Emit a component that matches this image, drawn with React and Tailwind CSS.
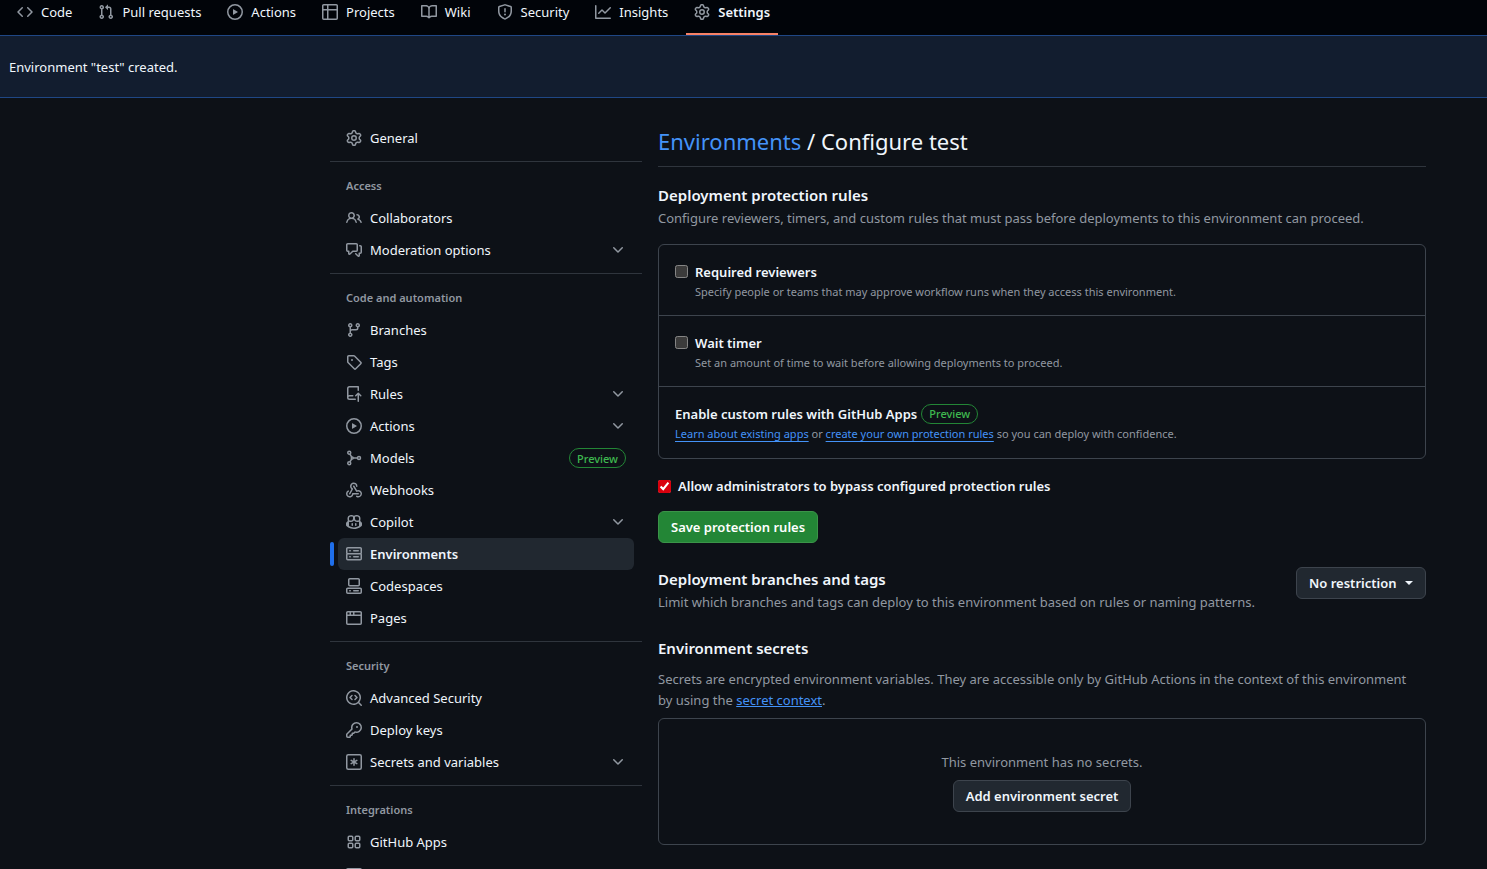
import React from "react";

const PATHS = {
  code: ["m11.28 3.22 4.25 4.25a.75.75 0 0 1 0 1.06l-4.25 4.25a.749.749 0 0 1-1.275-.326.749.749 0 0 1 .215-.734L13.94 8l-3.72-3.72a.749.749 0 0 1 .326-1.275.749.749 0 0 1 .734.215Zm-6.56 0a.751.751 0 0 1 1.042.018.751.751 0 0 1 .018 1.042L2.06 8l3.72 3.72a.749.749 0 0 1-.326 1.275.749.749 0 0 1-.734-.215L.47 8.53a.75.75 0 0 1 0-1.06Z"],
  pullRequest: ["M1.5 3.25a2.25 2.25 0 1 1 3 2.122v5.256a2.251 2.251 0 1 1-1.5 0V5.372A2.25 2.25 0 0 1 1.5 3.25Zm5.677-.177L9.573.677A.25.25 0 0 1 10 .854V2.5h1A2.5 2.5 0 0 1 13.5 5v5.628a2.251 2.251 0 1 1-1.5 0V5a1 1 0 0 0-1-1h-1v1.646a.25.25 0 0 1-.427.177L7.177 3.427a.25.25 0 0 1 0-.354ZM3.75 2.5a.75.75 0 1 0 0 1.5.75.75 0 0 0 0-1.5Zm0 9.5a.75.75 0 1 0 0 1.5.75.75 0 0 0 0-1.5Zm8.25.75a.75.75 0 1 0 1.5 0 .75.75 0 0 0-1.5 0Z"],
  play: ["M8 0a8 8 0 1 1 0 16A8 8 0 0 1 8 0ZM1.5 8a6.5 6.5 0 1 0 13 0 6.5 6.5 0 0 0-13 0Zm4.879-2.773 4.264 2.559a.25.25 0 0 1 0 .428l-4.264 2.559A.25.25 0 0 1 6 10.559V5.442a.25.25 0 0 1 .379-.215Z"],
  table: ["M0 1.75C0 .784.784 0 1.75 0h12.5C15.216 0 16 .784 16 1.75v12.5A1.75 1.75 0 0 1 14.25 16H1.75A1.75 1.75 0 0 1 0 14.25ZM6.5 6.5v8h7.75a.25.25 0 0 0 .25-.25V6.5Zm8-1.5V1.75a.25.25 0 0 0-.25-.25H6.5V5Zm-13 1.5v7.75c0 .138.112.25.25.25H5v-8ZM5 5V1.5H1.75a.25.25 0 0 0-.25.25V5Z"],
  book: ["M0 1.75A.75.75 0 0 1 .75 1h4.253c1.227 0 2.317.59 3 1.501A3.743 3.743 0 0 1 11.006 1h4.245a.75.75 0 0 1 .75.75v10.5a.75.75 0 0 1-.75.75h-4.507a2.25 2.25 0 0 0-1.591.659l-.622.621a.75.75 0 0 1-1.06 0l-.622-.621A2.25 2.25 0 0 0 5.258 13H.75a.75.75 0 0 1-.75-.75Zm7.251 10.324.004-5.073-.002-2.253A2.25 2.25 0 0 0 5.003 2.5H1.5v9h3.757a3.75 3.75 0 0 1 1.994.574ZM8.755 4.75l-.004 7.322a3.752 3.752 0 0 1 1.992-.572H14.5v-9h-3.495a2.25 2.25 0 0 0-2.25 2.25Z"],
  shield: ["M7.467.133a1.748 1.748 0 0 1 1.066 0l5.25 1.68A1.75 1.75 0 0 1 15 3.48V7c0 1.566-.32 3.182-1.303 4.682-.983 1.498-2.585 2.813-5.032 3.855a1.697 1.697 0 0 1-1.33 0c-2.447-1.042-4.049-2.357-5.032-3.855C1.32 10.182 1 8.566 1 7V3.48a1.75 1.75 0 0 1 1.217-1.667Zm.61 1.429a.25.25 0 0 0-.153 0l-5.25 1.68a.25.25 0 0 0-.174.238V7c0 1.358.275 2.666 1.057 3.86.784 1.194 2.121 2.34 4.366 3.297a.196.196 0 0 0 .154 0c2.245-.956 3.582-2.104 4.366-3.298C13.225 9.666 13.5 8.36 13.5 7V3.48a.251.251 0 0 0-.174-.237l-5.25-1.68ZM8.75 4.75v3a.75.75 0 0 1-1.5 0v-3a.75.75 0 0 1 1.5 0ZM9 10.5a1 1 0 1 1-2 0 1 1 0 0 1 2 0Z"],
  graph: ["M1.5 1.75V13.5h13.75a.75.75 0 0 1 0 1.5H.75a.75.75 0 0 1-.75-.75V1.75a.75.75 0 0 1 1.5 0Zm14.28 2.53-5.25 5.25a.75.75 0 0 1-1.06 0L7 7.06 4.28 9.78a.751.751 0 0 1-1.042-.018.751.751 0 0 1-.018-1.042l3.25-3.25a.75.75 0 0 1 1.06 0L10 7.94l4.72-4.72a.751.751 0 0 1 1.042.018.751.751 0 0 1 .018 1.042Z"],
  gear: ["M8 0a8.2 8.2 0 0 1 .701.031C9.444.095 9.99.645 10.16 1.29l.288 1.107c.018.066.079.158.212.224.231.114.454.243.668.386.123.082.233.09.299.071l1.103-.303c.644-.176 1.392.021 1.82.63.27.385.506.792.704 1.218.315.675.111 1.422-.364 1.891l-.814.806c-.049.048-.098.147-.088.294.016.257.016.515 0 .772-.01.147.038.246.088.294l.814.806c.475.469.679 1.216.364 1.891a7.977 7.977 0 0 1-.704 1.217c-.428.61-1.176.807-1.82.63l-1.102-.302c-.067-.019-.177-.011-.3.071a5.909 5.909 0 0 1-.668.386c-.133.066-.194.158-.211.224l-.29 1.106c-.168.646-.715 1.196-1.458 1.26a8.006 8.006 0 0 1-1.402 0c-.743-.064-1.289-.614-1.458-1.26l-.289-1.106c-.018-.066-.079-.158-.212-.224a5.738 5.738 0 0 1-.668-.386c-.123-.082-.233-.09-.299-.071l-1.103.303c-.644.176-1.392-.021-1.82-.63a8.12 8.12 0 0 1-.704-1.218c-.315-.675-.111-1.422.363-1.891l.815-.806c.05-.048.098-.147.088-.294a6.214 6.214 0 0 1 0-.772c.01-.147-.038-.246-.088-.294l-.815-.806C.635 6.045.431 5.298.746 4.623a7.92 7.92 0 0 1 .704-1.217c.428-.61 1.176-.807 1.82-.63l1.102.302c.067.019.177.011.3-.071.214-.143.437-.272.668-.386.133-.066.194-.158.211-.224l.29-1.106C6.009.645 6.556.095 7.299.03 7.53.01 7.764 0 8 0Zm-.571 1.525c-.036.003-.108.036-.137.146l-.289 1.105c-.147.561-.549.967-.998 1.189-.173.086-.34.183-.5.29-.417.278-.97.423-1.529.27l-1.103-.303c-.109-.03-.175.016-.195.045-.22.312-.412.644-.573.99-.014.031-.021.11.059.19l.815.806c.411.406.562.957.53 1.456a4.709 4.709 0 0 0 0 .582c.032.499-.119 1.05-.53 1.456l-.815.806c-.081.08-.073.159-.059.19.162.346.353.677.573.989.02.03.085.076.195.046l1.102-.303c.56-.153 1.113-.008 1.53.27.161.107.328.204.501.29.447.222.85.629.997 1.189l.289 1.105c.029.109.101.143.137.146a6.6 6.6 0 0 0 1.142 0c.036-.003.108-.036.137-.146l.289-1.105c.147-.561.549-.967.998-1.189.173-.086.34-.183.5-.29.417-.278.97-.423 1.529-.27l1.103.303c.109.029.175-.016.195-.045.22-.313.411-.644.573-.99.014-.031.021-.11-.059-.19l-.815-.806c-.411-.406-.562-.957-.53-1.456a4.709 4.709 0 0 0 0-.582c-.032-.499.119-1.05.53-1.456l.815-.806c.081-.08.073-.159.059-.19a6.464 6.464 0 0 0-.573-.989c-.02-.03-.085-.076-.195-.046l-1.102.303c-.56.153-1.113.008-1.53-.27a4.44 4.44 0 0 0-.501-.29c-.447-.222-.85-.629-.997-1.189l-.289-1.105c-.029-.11-.101-.143-.137-.146a6.6 6.6 0 0 0-1.142 0ZM11 8a3 3 0 1 1-6 0 3 3 0 0 1 6 0ZM9.5 8a1.5 1.5 0 1 0-3.001.001A1.5 1.5 0 0 0 9.5 8Z"],
  people: ["M2 5.5a3.5 3.5 0 1 1 5.898 2.549 5.508 5.508 0 0 1 3.034 4.084.75.75 0 1 1-1.482.235 4 4 0 0 0-7.9 0 .75.75 0 0 1-1.482-.236A5.507 5.507 0 0 1 3.102 8.05 3.493 3.493 0 0 1 2 5.5ZM11 4a3.001 3.001 0 0 1 2.22 5.018 5.01 5.01 0 0 1 2.56 3.012.749.749 0 0 1-.885.954.752.752 0 0 1-.549-.514 3.507 3.507 0 0 0-2.522-2.372.75.75 0 0 1-.574-.73v-.352a.75.75 0 0 1 .416-.672A1.5 1.5 0 0 0 11 5.5.75.75 0 0 1 11 4Zm-5.5-.5a2 2 0 1 0-.001 3.999A2 2 0 0 0 5.5 3.5Z"],
  discussion: ["M1.75 1h8.5c.966 0 1.75.784 1.75 1.75v5.5A1.75 1.75 0 0 1 10.25 10H7.061l-2.574 2.573A1.458 1.458 0 0 1 2 11.543V10h-.25A1.75 1.75 0 0 1 0 8.25v-5.5C0 1.784.784 1 1.75 1ZM1.5 2.75v5.5c0 .138.112.25.25.25h1a.75.75 0 0 1 .75.75v2.19l2.72-2.72a.749.749 0 0 1 .53-.22h3.5a.25.25 0 0 0 .25-.25v-5.5a.25.25 0 0 0-.25-.25h-8.5a.25.25 0 0 0-.25.25Zm13 2a.25.25 0 0 0-.25-.25h-.5a.75.75 0 0 1 0-1.5h.5c.966 0 1.75.784 1.75 1.75v5.5A1.75 1.75 0 0 1 14.25 12H14v1.543a1.458 1.458 0 0 1-2.487 1.03L9.22 12.28a.749.749 0 0 1 .326-1.275.749.749 0 0 1 .734.215l2.22 2.22v-2.19a.75.75 0 0 1 .75-.75h1a.25.25 0 0 0 .25-.25Z"],
  branch: ["M9.5 3.25a2.25 2.25 0 1 1 3 2.122V6A2.5 2.5 0 0 1 10 8.5H6a1 1 0 0 0-1 1v1.128a2.251 2.251 0 1 1-1.5 0V5.372a2.25 2.25 0 1 1 1.5 0v1.836A2.493 2.493 0 0 1 6 7h4a1 1 0 0 0 1-1v-.628A2.25 2.25 0 0 1 9.5 3.25Zm-6 0a.75.75 0 1 0 1.5 0 .75.75 0 0 0-1.5 0Zm8.25-.75a.75.75 0 1 0 0 1.5.75.75 0 0 0 0-1.5ZM4.25 12a.75.75 0 1 0 0 1.5.75.75 0 0 0 0-1.5Z"],
  tag: ["M1 7.775V2.75C1 1.784 1.784 1 2.75 1h5.025c.464 0 .91.184 1.238.513l6.25 6.25a1.75 1.75 0 0 1 0 2.474l-5.026 5.026a1.75 1.75 0 0 1-2.474 0l-6.25-6.25A1.752 1.752 0 0 1 1 7.775Zm1.5 0c0 .066.026.13.073.177l6.25 6.25a.25.25 0 0 0 .354 0l5.025-5.025a.25.25 0 0 0 0-.354l-6.25-6.25a.25.25 0 0 0-.177-.073H2.75a.25.25 0 0 0-.25.25ZM6 5a1 1 0 1 1 0 2 1 1 0 0 1 0-2Z"],
  repoPush: ["M1 2.5A2.5 2.5 0 0 1 3.5 0h8.75a.75.75 0 0 1 .75.75v3.5a.75.75 0 0 1-1.5 0V1.5h-8a1 1 0 0 0-1 1v6.708A2.493 2.493 0 0 1 3.5 9h3.25a.75.75 0 0 1 0 1.5H3.5a1 1 0 0 0 0 2h5.75a.75.75 0 0 1 0 1.5H3.5A2.5 2.5 0 0 1 1 11.5Zm13.23 7.79-.001.001-1.224-1.224v6.184a.75.75 0 0 1-1.5 0V9.066L10.28 10.29a.75.75 0 0 1-1.06-1.061l2.505-2.504a.75.75 0 0 1 1.06 0L15.29 9.23a.751.751 0 0 1-.018 1.042.751.751 0 0 1-1.042.018Z"],
  webhook: [
    "M5.5 4.25a2.25 2.25 0 0 1 4.5 0 .75.75 0 0 0 1.5 0 3.75 3.75 0 1 0-6.14 2.889l-2.272 4.258a.75.75 0 0 0 1.324.706L7 7.25a.75.75 0 0 0-.309-1.015A2.25 2.25 0 0 1 5.5 4.25Z",
    "M7.364 3.607a.75.75 0 0 1 1.03.257l2.608 4.349a3.75 3.75 0 1 1-.628 6.785.75.75 0 0 1 .752-1.299 2.25 2.25 0 1 0-.033-3.88.75.75 0 0 1-1.03-.256L7.107 4.636a.75.75 0 0 1 .257-1.03Z",
    "M2.9 8.776A.75.75 0 0 1 2.625 9.8 2.25 2.25 0 1 0 6 11.75a.75.75 0 0 1 .75-.751h5.5a.75.75 0 0 1 0 1.5H7.425a3.751 3.751 0 1 1-5.55-3.998.75.75 0 0 1 1.024.274Z",
  ],
  copilot: [
    "M7.998 15.035c-4.562 0-7.873-2.914-7.998-3.749V9.338c.085-.628.677-1.686 1.588-2.065.013-.07.024-.143.036-.218.029-.183.06-.384.126-.612-.201-.508-.254-1.084-.254-1.656 0-.87.128-1.769.693-2.484.579-.733 1.494-1.124 2.724-1.261 1.206-.134 2.262.034 2.944.765.05.053.096.108.139.165.044-.057.094-.112.143-.165.682-.731 1.738-.899 2.944-.765 1.23.137 2.145.528 2.724 1.261.566.715.693 1.614.693 2.484 0 .572-.053 1.148-.254 1.656.066.228.098.429.126.612.012.076.024.148.037.218.924.385 1.522 1.471 1.591 2.095v1.872c0 .766-3.351 3.795-8.002 3.795Zm0-1.485c2.28 0 4.584-1.11 5.002-1.433V7.862l-.023-.116c-.49.21-1.075.291-1.727.291-1.146 0-2.059-.327-2.71-.991A3.222 3.222 0 0 1 8 6.303a3.24 3.24 0 0 1-.544.743c-.65.664-1.563.991-2.71.991-.652 0-1.236-.081-1.727-.291l-.023.116v4.255c.419.323 2.722 1.433 5.002 1.433ZM6.762 2.83c-.193-.206-.637-.413-1.682-.297-1.019.113-1.479.404-1.713.7-.247.312-.369.789-.369 1.554 0 .793.129 1.171.308 1.371.162.181.519.379 1.442.379.853 0 1.339-.235 1.638-.54.315-.322.527-.827.617-1.553.117-.935-.037-1.395-.241-1.614Zm4.155-.297c-1.044-.116-1.488.091-1.681.297-.204.219-.359.679-.242 1.614.091.726.303 1.231.618 1.553.299.305.784.54 1.638.54.922 0 1.28-.198 1.442-.379.179-.2.308-.578.308-1.371 0-.765-.123-1.242-.37-1.554-.233-.296-.693-.587-1.713-.7Z",
    "M6.25 9.037a.75.75 0 0 1 .75.75v1.501a.75.75 0 0 1-1.5 0V9.787a.75.75 0 0 1 .75-.75Zm4.25.75v1.501a.75.75 0 0 1-1.5 0V9.787a.75.75 0 0 1 1.5 0Z",
  ],
  server: ["M1.75 1h12.5c.966 0 1.75.784 1.75 1.75v4c0 .372-.116.717-.314 1 .198.283.314.628.314 1v4a1.75 1.75 0 0 1-1.75 1.75H1.75A1.75 1.75 0 0 1 0 12.75v-4c0-.358.109-.707.314-1a1.739 1.739 0 0 1-.314-1v-4C0 1.784.784 1 1.75 1ZM1.5 2.75v4c0 .138.112.25.25.25h12.5a.25.25 0 0 0 .25-.25v-4a.25.25 0 0 0-.25-.25H1.75a.25.25 0 0 0-.25.25Zm.25 5.75a.25.25 0 0 0-.25.25v4c0 .138.112.25.25.25h12.5a.25.25 0 0 0 .25-.25v-4a.25.25 0 0 0-.25-.25ZM7 4.75A.75.75 0 0 1 7.75 4h4.5a.75.75 0 0 1 0 1.5h-4.5A.75.75 0 0 1 7 4.75ZM7.75 10h4.5a.75.75 0 0 1 0 1.5h-4.5a.75.75 0 0 1 0-1.5ZM3 4.75A.75.75 0 0 1 3.75 4h.5a.75.75 0 0 1 0 1.5h-.5A.75.75 0 0 1 3 4.75ZM3.75 10h.5a.75.75 0 0 1 0 1.5h-.5a.75.75 0 0 1 0-1.5Z"],
  codespaces: [
    "M0 11.25c0-.966.784-1.75 1.75-1.75h12.5c.966 0 1.75.784 1.75 1.75v3A1.75 1.75 0 0 1 14.25 16H1.75A1.75 1.75 0 0 1 0 14.25Zm2-9.5C2 .784 2.784 0 3.75 0h8.5C13.216 0 14 .784 14 1.75v5a1.75 1.75 0 0 1-1.75 1.75h-8.5A1.75 1.75 0 0 1 2 6.75Zm1.75-.25a.25.25 0 0 0-.25.25v5c0 .138.112.25.25.25h8.5a.25.25 0 0 0 .25-.25v-5a.25.25 0 0 0-.25-.25Zm-2 9.5a.25.25 0 0 0-.25.25v3c0 .138.112.25.25.25h12.5a.25.25 0 0 0 .25-.25v-3a.25.25 0 0 0-.25-.25Z",
    "M7 12.75a.75.75 0 0 1 .75-.75h4.5a.75.75 0 0 1 0 1.5h-4.5a.75.75 0 0 1-.75-.75Zm-4 0a.75.75 0 0 1 .75-.75h.5a.75.75 0 0 1 0 1.5h-.5a.75.75 0 0 1-.75-.75Z",
  ],
  browser: ["M0 2.75C0 1.784.784 1 1.75 1h12.5c.966 0 1.75.784 1.75 1.75v10.5A1.75 1.75 0 0 1 14.25 15H1.75A1.75 1.75 0 0 1 0 13.25ZM14.5 6h-13v7.25c0 .138.112.25.25.25h12.5a.25.25 0 0 0 .25-.25Zm-6-3.5v2h6V2.75a.25.25 0 0 0-.25-.25ZM5 2.5v2h2v-2Zm-3.25 0a.25.25 0 0 0-.25.25V4.5h2v-2Z"],
  codescan: [
    "M8.47 4.97a.75.75 0 0 0 0 1.06L9.94 7.5 8.47 8.97a.75.75 0 1 0 1.06 1.06l2-2a.75.75 0 0 0 0-1.06l-2-2a.75.75 0 0 0-1.06 0ZM6.53 6.03a.75.75 0 0 0-1.06-1.06l-2 2a.75.75 0 0 0 0 1.06l2 2a.75.75 0 1 0 1.06-1.06L5.06 7.5l1.47-1.47Z",
    "M12.246 13.307a7.501 7.501 0 1 1 1.06-1.06l2.474 2.473a.749.749 0 0 1-.326 1.275.749.749 0 0 1-.734-.215ZM1.5 7.5a6.002 6.002 0 0 0 3.608 5.504 6.002 6.002 0 0 0 6.486-1.117.748.748 0 0 1 .292-.293A6 6 0 1 0 1.5 7.5Z",
  ],
  key: ["M10.5 0a5.499 5.499 0 1 1-1.288 10.848l-.932.932a.749.749 0 0 1-.53.22H7v.75a.749.749 0 0 1-.22.53l-.5.5a.749.749 0 0 1-.53.22H5v.75a.749.749 0 0 1-.22.53l-.5.5a.749.749 0 0 1-.53.22h-2A1.75 1.75 0 0 1 0 14.25v-2c0-.199.079-.389.22-.53l4.932-4.932A5.5 5.5 0 0 1 10.5 0Zm-4 5.5c-.001.431.069.86.205 1.269a.75.75 0 0 1-.181.768L1.5 12.56v1.69c0 .138.112.25.25.25h1.69l.06-.06v-1.19a.75.75 0 0 1 .75-.75h1.19l.06-.06v-1.19a.75.75 0 0 1 .75-.75h1.19l1.023-1.025a.75.75 0 0 1 .768-.18A4 4 0 1 0 6.5 5.5ZM11 6a1 1 0 1 1 0-2 1 1 0 0 1 0 2Z"],
  asterisk: [
    "M0 2.25A2.25 2.25 0 0 1 2.25 0h11.5A2.25 2.25 0 0 1 16 2.25v11.5A2.25 2.25 0 0 1 13.75 16H2.25A2.25 2.25 0 0 1 0 13.75ZM2.25 1.5a.75.75 0 0 0-.75.75v11.5c0 .414.336.75.75.75h11.5a.75.75 0 0 0 .75-.75V2.25a.75.75 0 0 0-.75-.75Z",
    "M8 4a.75.75 0 0 1 .75.75V6.7l1.69-.975a.75.75 0 0 1 .75 1.3L9.5 8l1.69.976a.75.75 0 0 1-.75 1.298L8.75 9.3v1.951a.75.75 0 0 1-1.5 0V9.299l-1.69.976a.75.75 0 0 1-.75-1.3L6.5 8l-1.69-.975a.75.75 0 0 1 .75-1.3l1.69.976V4.75A.75.75 0 0 1 8 4Z",
  ],
  mail: ["M1.75 2h12.5c.966 0 1.75.784 1.75 1.75v8.5A1.75 1.75 0 0 1 14.25 14H1.75A1.75 1.75 0 0 1 0 12.25v-8.5C0 2.784.784 2 1.75 2ZM1.5 12.251c0 .138.112.25.25.25h12.5a.25.25 0 0 0 .25-.25V5.809L8.38 9.397a.75.75 0 0 1-.76 0L1.5 5.809v6.442Zm13-8.181v-.32a.25.25 0 0 0-.25-.25H1.75a.25.25 0 0 0-.25.25v.32L8 7.88Z"],
  chevron: ["M12.78 5.22a.749.749 0 0 1 0 1.06l-4.25 4.25a.749.749 0 0 1-1.06 0L3.22 6.28a.749.749 0 1 1 1.06-1.06L8 8.939l3.72-3.719a.749.749 0 0 1 1.06 0Z"],
};

const STROKED = {
  models: (
    <>
      <circle cx="3.25" cy="2.75" r="1.5" />
      <circle cx="3.25" cy="13.25" r="1.5" />
      <circle cx="13" cy="8" r="1.5" />
      <circle cx="6.25" cy="8" r="1" />
      <path d="M4 4.25 5.75 7.1M4 11.75 5.75 8.9M7.25 8h4.25" />
    </>
  ),
  apps: (
    <>
      <rect x="2.25" y="2.25" width="4.5" height="4.5" rx="1" />
      <rect x="9.25" y="2.25" width="4.5" height="4.5" rx="1" />
      <rect x="2.25" y="9.25" width="4.5" height="4.5" rx="1" />
      <rect x="9.25" y="9.25" width="4.5" height="4.5" rx="1" />
    </>
  ),
};

function Icon({ name }) {
  if (STROKED[name]) {
    return (
      <svg viewBox="0 0 16 16" className="size-4 shrink-0 text-[#9198a1]" fill="none" stroke="currentColor" strokeWidth="1.5" aria-hidden="true">
        {STROKED[name]}
      </svg>
    );
  }
  return (
    <svg viewBox="0 0 16 16" className="size-4 shrink-0 text-[#9198a1]" fill="currentColor" aria-hidden="true">
      {PATHS[name].map((d) => (
        <path key={d} d={d} />
      ))}
    </svg>
  );
}

const TABS = [
  ["code", "Code"],
  ["pullRequest", "Pull requests"],
  ["play", "Actions"],
  ["table", "Projects"],
  ["book", "Wiki"],
  ["shield", "Security"],
  ["graph", "Insights"],
  ["gear", "Settings"],
];

const SECTIONS = [
  { items: [{ icon: "gear", label: "General" }] },
  {
    title: "Access",
    items: [
      { icon: "people", label: "Collaborators" },
      { icon: "discussion", label: "Moderation options", expandable: true },
    ],
  },
  {
    title: "Code and automation",
    items: [
      { icon: "branch", label: "Branches" },
      { icon: "tag", label: "Tags" },
      { icon: "repoPush", label: "Rules", expandable: true },
      { icon: "play", label: "Actions", expandable: true },
      { icon: "models", label: "Models", preview: true },
      { icon: "webhook", label: "Webhooks" },
      { icon: "copilot", label: "Copilot", expandable: true },
      { icon: "server", label: "Environments", active: true },
      { icon: "codespaces", label: "Codespaces" },
      { icon: "browser", label: "Pages" },
    ],
  },
  {
    title: "Security",
    items: [
      { icon: "codescan", label: "Advanced Security" },
      { icon: "key", label: "Deploy keys" },
      { icon: "asterisk", label: "Secrets and variables", expandable: true },
    ],
  },
  {
    title: "Integrations",
    items: [
      { icon: "apps", label: "GitHub Apps" },
      { icon: "mail", label: "Email notifications" },
    ],
  },
];

function Preview() {
  return (
    <span className="inline-flex h-5 items-center rounded-full border border-[#238636] px-[7px] text-[11px] font-medium text-[#3fb950]">
      Preview
    </span>
  );
}

function SidebarItem({ item }) {
  const base = "flex h-8 w-full items-center gap-2 rounded-md px-2 text-left";
  if (item.expandable) {
    return (
      <li>
        <button type="button" aria-expanded="false" className={base}>
          <Icon name={item.icon} />
          <span className="grow">{item.label}</span>
          <Icon name="chevron" />
        </button>
      </li>
    );
  }
  return (
    <li className="relative">
      {item.active && <span className="absolute top-1 -left-2 h-6 w-1 rounded-md bg-[#1f6feb]" />}
      <a href="#" aria-current={item.active ? "page" : undefined} className={item.active ? `${base} bg-[#212830] font-semibold` : base}>
        <Icon name={item.icon} />
        <span className="grow">{item.label}</span>
        {item.preview && <Preview />}
      </a>
    </li>
  );
}

function Sidebar() {
  return (
    <nav aria-label="Repository settings">
      {SECTIONS.map((section, i) => (
        <div key={section.items[0].label} className={i < SECTIONS.length - 1 ? "border-b border-[#2f353d] px-2 pb-[7px]" : "px-2"}>
          {section.title && (
            <h2 className="flex h-10 items-center px-2 pt-1.5 text-[11px] font-semibold text-[#9198a1]">{section.title}</h2>
          )}
          <ul>
            {section.items.map((item) => (
              <SidebarItem key={item.label} item={item} />
            ))}
          </ul>
        </div>
      ))}
    </nav>
  );
}

function RuleRow({ id, title, text }) {
  return (
    <div className="flex gap-[7px] border-b border-[#3d444d] px-4 pt-4 pb-[14px]">
      <input id={id} type="checkbox" aria-describedby={`${id}-note`} className="mt-1 size-[13px] shrink-0 scheme-dark" />
      <div>
        <label htmlFor={id} className="block leading-[22px] font-semibold">{title}</label>
        <p id={`${id}-note`} className="text-[11px] leading-[18px] text-[#9198a1]">{text}</p>
      </div>
    </div>
  );
}

export default function App() {
  return (
    <div className="min-h-screen bg-[#0d1117] font-['Noto_Sans',sans-serif] text-[13px] leading-[21px] text-[#f0f6fc]">
      <nav aria-label="Repository" className="flex gap-[10px] bg-[#010409] pl-[9px]">
        {TABS.map(([icon, label]) => {
          const active = label === "Settings";
          return (
            <a
              key={label}
              href="#"
              aria-current={active ? "page" : undefined}
              className={
                active
                  ? "flex h-[35px] items-start border-b-2 border-[#f78166] px-2 font-semibold"
                  : "flex h-[35px] items-start px-2"
              }
            >
              <span className="flex h-6 items-center gap-2">
                <Icon name={icon} />
                {label}
              </span>
            </a>
          );
        })}
      </nav>

      <div role="status" className="border-y border-[#1f4785] bg-[#121d2f] px-[9px] pt-[21px] pb-[19px]">
        Environment "test" created.
      </div>

      <div className="grid grid-cols-[312px_1fr] gap-4 pt-6 pr-[61px] pl-[330px]">
        <Sidebar />

        <main>
          <h1 className="border-b border-[#2f353d] pb-1.5 text-[22px] leading-[38px]">
            <a href="#" className="text-[#4493f8]">Environments</a> / Configure test
          </h1>

          <h2 className="mt-4 text-[15px] leading-6 font-semibold">Deployment protection rules</h2>
          <p className="leading-[23px] text-[#9198a1]">
            Configure reviewers, timers, and custom rules that must pass before deployments to this environment can proceed.
          </p>

          <div className="mt-[14px] rounded-md border border-[#3d444d]">
            <RuleRow
              id="reviewers"
              title="Required reviewers"
              text="Specify people or teams that may approve workflow runs when they access this environment."
            />
            <RuleRow id="timer" title="Wait timer" text="Set an amount of time to wait before allowing deployments to proceed." />
            <div className="px-4 pt-4 pb-[15px]">
              <h3 className="flex items-center gap-1 leading-[22px] font-semibold">
                Enable custom rules with GitHub Apps <Preview />
              </h3>
              <p className="text-[11px] leading-[18px] text-[#9198a1]">
                <a href="#" className="text-[#4493f8] underline underline-offset-3">Learn about existing apps</a> or{" "}
                <a href="#" className="text-[#4493f8] underline underline-offset-3">create your own protection rules</a> so you can deploy with confidence.
              </p>
            </div>
          </div>

          <div className="mt-4 flex items-center gap-[7px]">
            <input id="bypass" type="checkbox" defaultChecked className="size-[13px] scheme-dark accent-[#d9000d]" />
            <label htmlFor="bypass" className="leading-[22px] font-semibold">Allow administrators to bypass configured protection rules</label>
          </div>
          <button type="button" className="mt-[14px] h-8 rounded-md border border-[#3b9449] bg-[#238636] px-3 font-semibold text-white">
            Save protection rules
          </button>

          <section className="mt-6 flex items-start justify-between gap-4">
            <div>
              <h2 className="text-[15px] leading-6 font-semibold">Deployment branches and tags</h2>
              <p className="leading-[23px] text-[#9198a1]">Limit which branches and tags can deploy to this environment based on rules or naming patterns.</p>
            </div>
            <div className="grid shrink-0 items-center">
              <select
                aria-label="Deployment branches and tags"
                className="col-start-1 row-start-1 h-8 w-[130px] appearance-none rounded-md border border-[#3d444d] bg-[#212830] px-3 font-semibold"
              >
                <option>No restriction</option>
              </select>
              <span className="pointer-events-none col-start-1 row-start-1 mr-[13px] justify-self-end border-x-4 border-t-4 border-x-transparent border-t-[#f0f6fc]" />
            </div>
          </section>

          <h2 className="mt-[22px] text-[15px] leading-6 font-semibold">Environment secrets</h2>
          <p className="mt-[9px] pr-2 text-[#9198a1]">
            Secrets are encrypted environment variables. They are accessible only by GitHub Actions in the context of this environment by using the{" "}
            <a href="#" className="text-[#4493f8] underline">secret context</a>.
          </p>
          <div className="mt-[7px] flex flex-col items-center gap-[7px] rounded-md border border-[#3d444d] pt-[33px] pb-8">
            <p className="text-[#9198a1]">This environment has no secrets.</p>
            <button type="button" className="h-8 rounded-md border border-[#3d444d] bg-[#212830] px-3 font-semibold">
              Add environment secret
            </button>
          </div>
        </main>
      </div>
    </div>
  );
}
